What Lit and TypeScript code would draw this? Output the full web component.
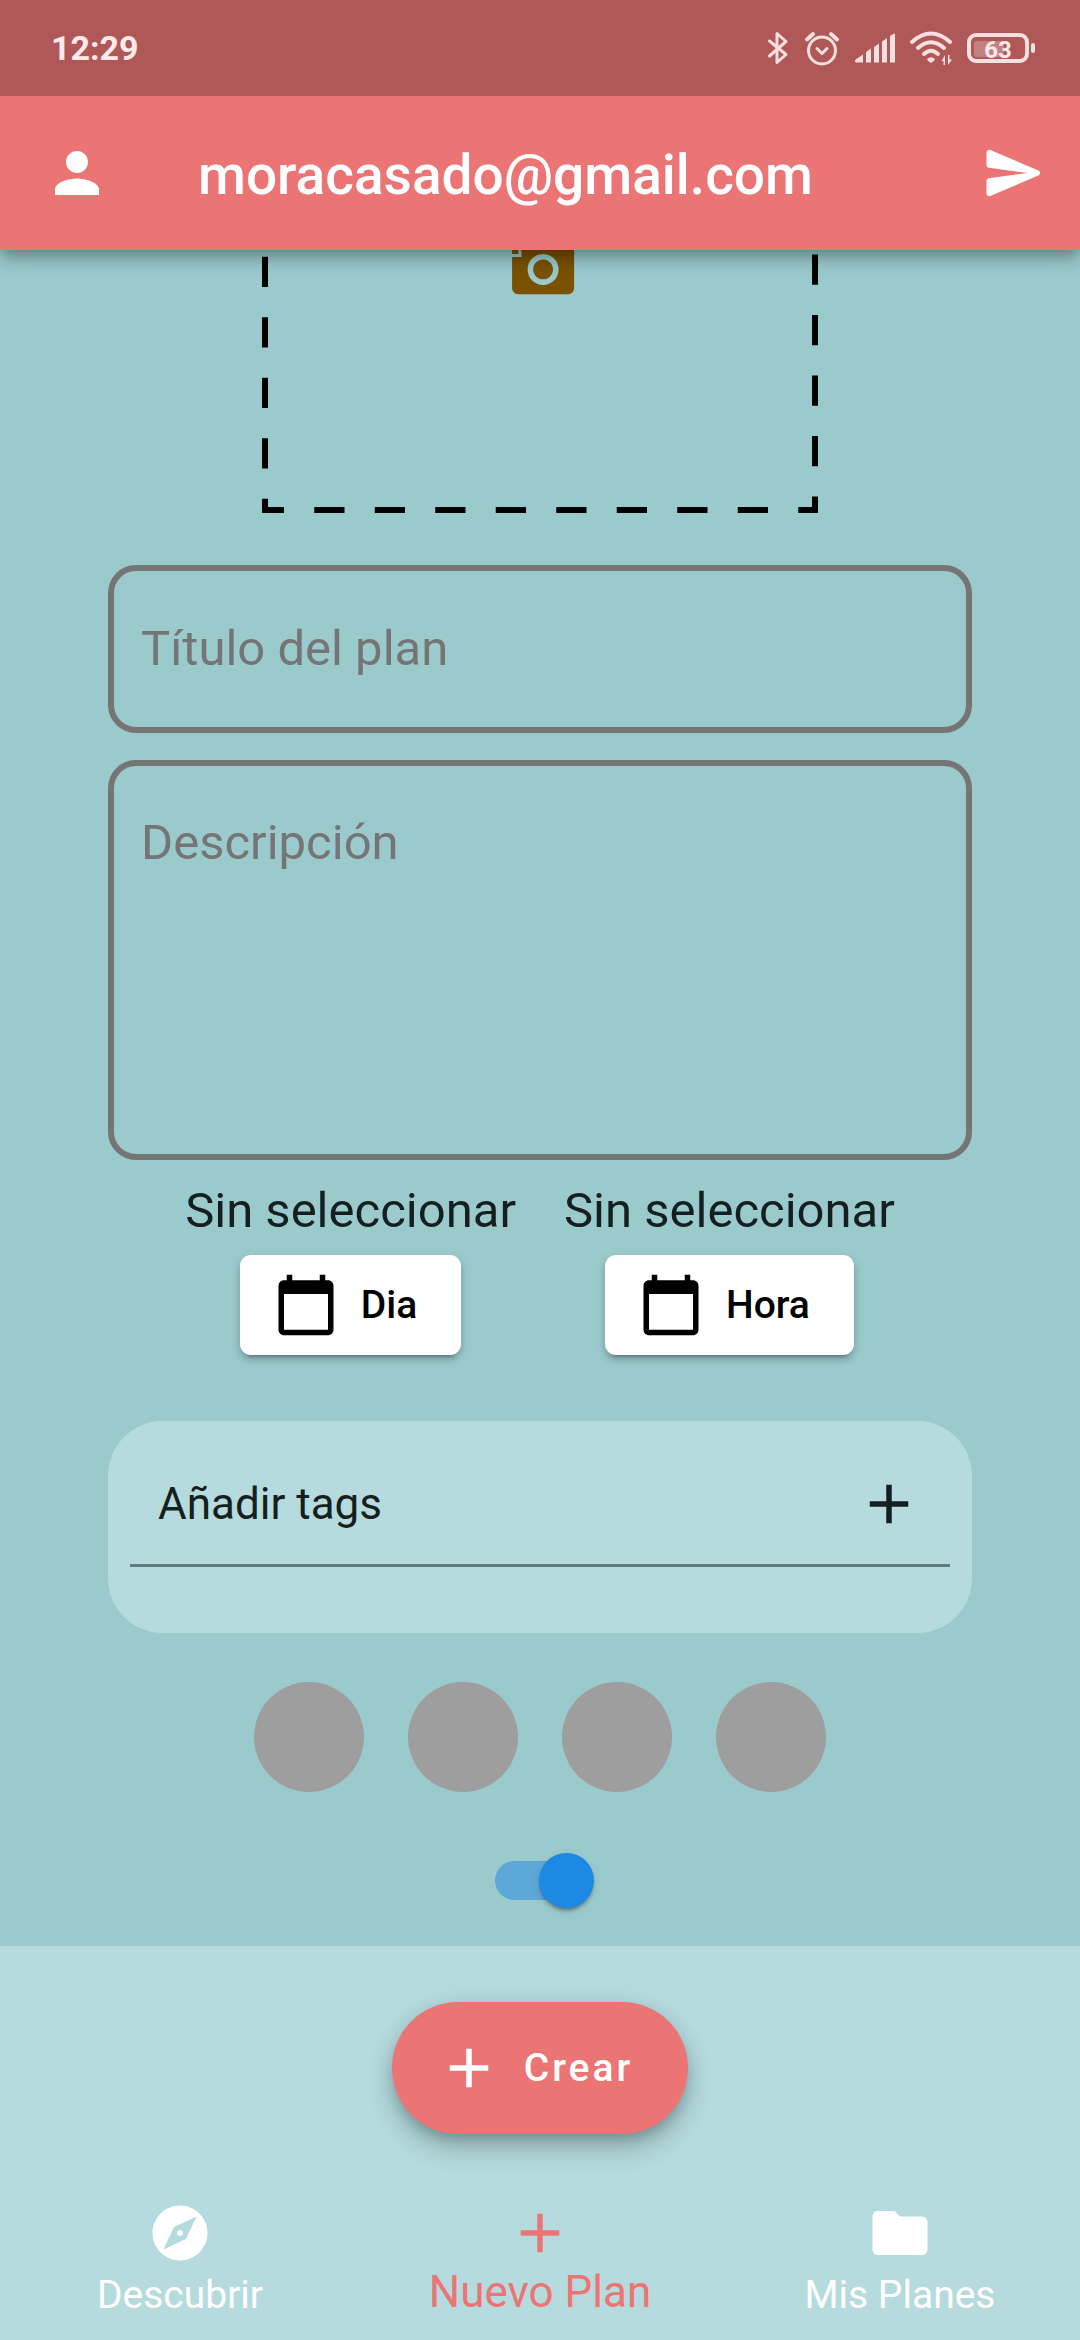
import { LitElement, html, css, svg } from "lit";
import { customElement, property, state } from "lit/decorators.js";
import { classMap } from "lit/directives/class-map.js";

const ICONS: Record<string, string> = {
  person:
    "M12 12c2.21 0 4-1.79 4-4s-1.79-4-4-4-4 1.79-4 4 1.79 4 4 4zm0 2c-2.67 0-8 1.34-8 4v2h16v-2c0-2.66-5.33-4-8-4z",
  send:
    "M3.4 20.4l17.45-7.48c.81-.35.81-1.49 0-1.84L3.4 3.6c-.66-.29-1.39.2-1.39.91L2 9.12c0 .5.37.93.87.99L17 12 2.87 13.88c-.5.07-.87.5-.87 1l.01 4.61c0 .71.73 1.2 1.39.91z",
  calendar:
    "M20 3h-1V1h-2v2H7V1H5v2H4c-1.1 0-2 .9-2 2v16c0 1.1.9 2 2 2h16c1.1 0 2-.9 2-2V5c0-1.1-.9-2-2-2zm0 18H4V8h16v13z",
  add: "M19 13h-6v6h-2v-6H5v-2h6V5h2v6h6v2z",
  explore:
    "M12 10.9c-.61 0-1.1.49-1.1 1.1s.49 1.1 1.1 1.1c.61 0 1.1-.49 1.1-1.1s-.49-1.1-1.1-1.1zM12 2C6.48 2 2 6.48 2 12s4.48 10 10 10 10-4.48 10-10S17.52 2 12 2zm2.19 12.19L6 18l3.81-8.19L18 6l-3.81 8.19z",
  folder:
    "M10 4H4c-1.1 0-1.99.9-1.99 2L2 18c0 1.1.9 2 2 2h16c1.1 0 2-.9 2-2V8c0-1.1-.9-2-2-2h-8l-2-2z",
};

const CAMERA =
  "M3 4V1h2v3h3v2H5v3H3V6H0V4h3zm3 6V7h3V4h7l1.83 2H21c1.1 0 2 .9 2 2v12c0 1.1-.9 2-2 2H5c-1.1 0-2-.9-2-2V10h3zm7 9c2.76 0 5-2.24 5-5s-2.24-5-5-5-5 2.24-5 5 2.24 5 5 5zm-3.2-5c0 1.77 1.43 3.2 3.2 3.2s3.2-1.43 3.2-3.2-1.43-3.2-3.2-3.2-3.2 1.43-3.2 3.2z";

@customElement("md-icon")
class MdIcon extends LitElement {
  @property() name = "add";

  static styles = css`
    :host {
      display: block;
      flex: none;
      width: 66px;
      height: 66px;
    }
    .glyph {
      display: block;
      width: 100%;
      height: 100%;
      fill: currentColor;
    }
  `;

  render() {
    return html`<svg class="glyph" viewBox="0 0 24 24" aria-hidden="true">
      <path d=${ICONS[this.name]}></path>
    </svg>`;
  }
}

@customElement("status-bar")
class StatusBar extends LitElement {
  static styles = css`
    :host {
      display: flex;
      align-items: center;
      justify-content: space-between;
      height: 96px;
      padding: 0 45px 0 51px;
      background: #af5857;
      color: #f7dfdf;
      font-family: Roboto, sans-serif;
      box-sizing: border-box;
    }
    .time {
      font-size: 34px;
      line-height: 40px;
      font-weight: 700;
      color: #fdebeb;
    }
    .tray {
      display: flex;
      align-items: center;
      gap: 15px;
    }
    .tray svg {
      display: block;
      fill: currentColor;
    }
    .line {
      fill: none;
      stroke: currentColor;
      stroke-linecap: round;
      stroke-linejoin: round;
    }
    .battery {
      display: flex;
      align-items: center;
      gap: 2px;
    }
    .cell {
      display: grid;
      align-items: center;
      width: 62px;
      height: 30px;
      padding: 3px;
      border: 4px solid currentColor;
      border-radius: 9px;
      box-sizing: border-box;
    }
    .cell > * {
      grid-area: 1 / 1;
    }
    .level {
      height: 16px;
      border-radius: 3px;
      background: #c38282;
    }
    .percent {
      padding-top: 2px;
      font-size: 24px;
      line-height: 16px;
      font-weight: 700;
      text-align: center;
      color: #fdebeb;
    }
    .nub {
      width: 4px;
      height: 10px;
      border-radius: 2px;
      background: currentColor;
    }
  `;

  render() {
    return html`
      <span class="time">12:29</span>
      <div class="tray">
        <svg width="22" height="34" viewBox="0 0 22 34" aria-hidden="true">
          <path class="line" stroke-width="3"
            d="M2.5 10L19 23.5L10 31.5V2.5L19 10.5L2.5 25"></path>
        </svg>
        <svg width="36" height="36" viewBox="0 0 36 36" aria-hidden="true">
          <circle class="line" stroke-width="3" cx="18" cy="20.5" r="13.5"></circle>
          <path class="line" stroke-width="3" d="M13 18.5L18 23.5L23 18.5"></path>
          <path class="line" stroke-width="4" d="M3 9.5L9 4M33 9.5L27 4"></path>
        </svg>
        <svg width="40" height="30" viewBox="0 0 40 30" aria-hidden="true">
          <path
            d="M0 27L8 21.5V29.5H1Q0 29.5 0 27ZM11 19L16 15.5V29.5H11ZM19 14L24 10.5V29.5H19ZM27 8.5L32 5V29.5H27ZM35 3L39 .5Q40 .5 40 1.5V29.5H35Z"></path>
        </svg>
        <svg width="42" height="34" viewBox="0 0 42 34" aria-hidden="true">
          <path class="line" stroke-width="4"
            d="M2 11Q21 -6 40 11"></path>
          <path class="line" stroke-width="4" d="M8 17Q21 5.5 34 17"></path>
          <path class="line" stroke-width="4" d="M14 23Q21 16.5 28 23"></path>
          <path d="M17 28Q21 24.5 25 28Q24.500 30.500 21 32Q17.500 30.500 17 28Z"></path>
          <path d="M35 34V24L31.500 30H33.500V34ZM38 24V34L42 28.500H39.500V24Z"></path>
        </svg>
        <div class="battery">
          <div class="cell">
            <span class="level" style="width:63%"></span>
            <span class="percent">63</span>
          </div>
          <span class="nub"></span>
        </div>
      </div>
    `;
  }
}

@customElement("app-root")
class AppRoot extends LitElement {
  @state() private current = "Nuevo Plan";

  private tabs = [
    { icon: "explore", label: "Descubrir" },
    { icon: "add", label: "Nuevo Plan" },
    { icon: "folder", label: "Mis Planes" },
  ];

  static styles = css`
    :host {
      --coral: #eb7575;
      --water: #9bcacd;
      --mist: #b5dbde;
      --ink: #151f20;
      display: flex;
      flex-direction: column;
      height: 100vh;
      background: var(--water);
      color: var(--ink);
      font-family: Roboto, sans-serif;
    }
    button,
    input,
    textarea {
      margin: 0;
      border: 0;
      padding: 0;
      background: none;
      color: inherit;
      font: inherit;
      box-sizing: border-box;
      outline: none;
    }
    button {
      cursor: pointer;
    }
    .top {
      flex: none;
      position: relative;
      z-index: 1;
      box-shadow: 0 6px 11px -3px rgba(0, 0, 0, 0.2),
        0 11px 14px 0 rgba(0, 0, 0, 0.14), 0 3px 28px 0 rgba(0, 0, 0, 0.12);
    }
    .appbar {
      display: flex;
      align-items: center;
      gap: 88px;
      height: 154px;
      padding: 0 33px 0 44px;
      background: var(--coral);
      color: #fff;
      box-sizing: border-box;
    }
    .title {
      flex: 1;
      margin: 0;
      padding-top: 4px;
      font-size: 55px;
      line-height: 64px;
      font-weight: 500;
    }
    .page {
      flex: 1;
      min-height: 0;
      overflow-y: auto;
      scrollbar-width: none;
    }
    .form {
      display: flex;
      flex-direction: column;
      align-items: center;
      padding: 22px 10% 38px;
    }
    .photo {
      margin-bottom: 52px;
    }
    .photo svg {
      display: block;
    }
    .frame {
      fill: none;
      stroke: #000;
      stroke-width: 6;
      stroke-dasharray: 30.25 30.25;
      stroke-dashoffset: -2;
    }
    .camera {
      fill: #7a5200;
    }
    .field {
      display: block;
      width: 100%;
      height: 168px;
      padding: 0 27px 2px;
      border: 6px solid #757575;
      border-radius: 28px;
      font-size: 49px;
      line-height: 58px;
    }
    .field::placeholder {
      color: #757575;
      opacity: 1;
    }
    .area {
      height: 400px;
      margin: 27px 0 22px;
      padding-top: 48px;
      resize: none;
    }
    .when {
      display: flex;
      gap: 48px;
      margin-bottom: 66px;
    }
    .slot {
      display: flex;
      flex-direction: column;
      align-items: center;
      gap: 15px;
      font-size: 49px;
      line-height: 58px;
    }
    .pick {
      display: flex;
      align-items: center;
      gap: 22px;
      height: 100px;
      padding: 0 44px 0 33px;
      border-radius: 11px;
      background: #fff;
      color: #000;
      font-size: 39px;
      line-height: 46px;
      font-weight: 500;
      box-shadow: 0 8px 3px -6px rgba(0, 0, 0, 0.2),
        0 5px 6px 0 rgba(0, 0, 0, 0.14), 0 3px 12px 0 rgba(0, 0, 0, 0.12);
    }
    .tags {
      width: 100%;
      padding: 22px 22px 66px;
      border-radius: 55px;
      background: var(--mist);
      box-sizing: border-box;
    }
    .addtag {
      display: flex;
      align-items: center;
      justify-content: space-between;
      width: 100%;
      height: 124px;
      padding: 0 28px;
      border-bottom: 3px solid #607b7d;
      font-size: 44px;
      line-height: 52px;
    }
    .slots {
      display: flex;
      gap: 44px;
      margin: 49px 0 61px;
    }
    .dot {
      width: 110px;
      height: 110px;
      border-radius: 50%;
      background: #9e9e9e;
    }
    .switch {
      appearance: none;
      display: grid;
      align-items: center;
      width: 108px;
      height: 55px;
      cursor: pointer;
    }
    .switch::before,
    .switch::after {
      content: "";
      grid-area: 1 / 1;
    }
    .switch::before {
      justify-self: center;
      width: 91px;
      height: 39px;
      border-radius: 20px;
      background: rgba(0, 0, 0, 0.35);
    }
    .switch::after {
      justify-self: start;
      width: 55px;
      height: 55px;
      border-radius: 50%;
      background: #fafafa;
      box-shadow: 0 5px 3px -3px rgba(0, 0, 0, 0.2),
        0 3px 3px 0 rgba(0, 0, 0, 0.14), 0 3px 8px 0 rgba(0, 0, 0, 0.12);
    }
    .switch:checked::before {
      background: rgba(30, 136, 229, 0.5);
    }
    .switch:checked::after {
      justify-self: end;
      background: #1e88e5;
    }
    .bottom {
      flex: none;
      display: flex;
      flex-direction: column;
      align-items: center;
      gap: 52px;
      padding-top: 56px;
      background: var(--mist);
    }
    .create {
      display: flex;
      align-items: center;
      gap: 22px;
      height: 132px;
      padding: 0 55px 0 44px;
      border-radius: 66px;
      background: var(--coral);
      color: #fff;
      font-size: 39px;
      line-height: 46px;
      font-weight: 500;
      letter-spacing: 3px;
      box-shadow: 0 8px 14px -3px rgba(0, 0, 0, 0.2),
        0 16px 28px 0 rgba(0, 0, 0, 0.16), 0 3px 28px 0 rgba(0, 0, 0, 0.08);
    }
    .nav {
      display: flex;
      width: 100%;
      height: 154px;
    }
    .tab {
      flex: 1;
      display: flex;
      flex-direction: column;
      align-items: center;
      padding-top: 14px;
      box-sizing: border-box;
      color: #fff;
      text-decoration: none;
      font-size: 39px;
      line-height: 58px;
    }
    .tab.active {
      color: var(--coral);
      font-size: 44px;
      line-height: 52px;
    }
  `;

  firstUpdated() {
    const page = this.renderRoot.querySelector(".page") as HTMLElement;
    page.scrollTop = page.scrollHeight;
  }

  private photoFrame() {
    return svg`
      <path class="frame" d="M3 3H553V497H3Z"></path>
      <path class="camera" transform="translate(240.8 213) scale(3.1)" d=${CAMERA}></path>
    `;
  }

  private picker(label: string) {
    return html`<div class="slot">
      <span>Sin seleccionar</span>
      <button class="pick" type="button">
        <md-icon name="calendar"></md-icon>${label}
      </button>
    </div>`;
  }

  render() {
    return html`
      <div class="top">
        <status-bar></status-bar>
        <header class="appbar">
          <button type="button" aria-label="Perfil"><md-icon name="person"></md-icon></button>
          <h1 class="title">moracasado@gmail.com</h1>
          <button type="button" aria-label="Enviar"><md-icon name="send"></md-icon></button>
        </header>
      </div>

      <main class="page">
        <form class="form" @submit=${(e: Event) => e.preventDefault()}>
          <button class="photo" type="button" aria-label="Añadir foto">
            <svg width="556" height="500" viewBox="0 0 556 500" aria-hidden="true">
              ${this.photoFrame()}
            </svg>
          </button>
          <input class="field" type="text" aria-label="Título del plan" placeholder="Título del plan" />
          <textarea class="field area" aria-label="Descripción" placeholder="Descripción"></textarea>
          <div class="when">${this.picker("Dia")}${this.picker("Hora")}</div>
          <section class="tags">
            <button class="addtag" type="button">Añadir tags<md-icon name="add"></md-icon></button>
          </section>
          <div class="slots">
            ${[0, 1, 2, 3].map(() => html`<span class="dot"></span>`)}
          </div>
          <input class="switch" type="checkbox" role="switch" aria-label="Plan público" checked />
        </form>
      </main>

      <footer class="bottom">
        <button class="create" type="button"><md-icon name="add"></md-icon>Crear</button>
        <nav class="nav">
          ${this.tabs.map(
            (t) => html`<a
              href="#"
              class=${classMap({ tab: true, active: t.label === this.current })}
              @click=${(e: Event) => {
                e.preventDefault();
                this.current = t.label;
              }}
              ><md-icon name=${t.icon}></md-icon>${t.label}</a
            >`
          )}
        </nav>
      </footer>
    `;
  }
}
